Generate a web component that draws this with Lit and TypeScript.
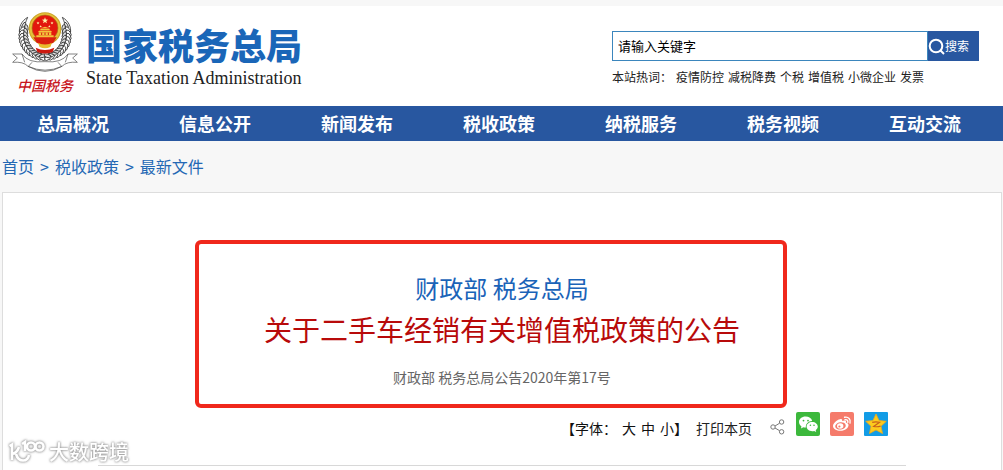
import { LitElement, html, css, svg } from "lit";
import { customElement } from "lit/decorators.js";

const NAV = ["总局概况", "信息公开", "新闻发布", "税收政策", "纳税服务", "税务视频", "互动交流"];
const HOT = ["疫情防控", "减税降费", "个税", "增值税", "小微企业", "发票"];
const STAR = "M0 -10 L2.4 -3.2 9.5 -3.1 3.8 1.2 5.9 8.1 0 4 -5.9 8.1 -3.8 1.2 -9.5 -3.1 -2.4 -3.2Z";

// Leaves of the wreath, laid out along an arc below the central disc.
const leaves = Array.from({ length: 12 }, (_, i) => {
  const deg = 196 - i * 9;
  const a = (deg * Math.PI) / 180;
  return { dx: Math.cos(a), y: 108 + 66 * Math.sin(a), rot: deg };
}).filter((l) => l.dx < -0.1);

const emblem = svg`
  <g stroke="#2b2b2b" stroke-width="2.4" fill="#fff">
    ${[1, -1].map(
      (s) => svg`<g transform=${`translate(133 0) scale(${s} 1)`}>
        <path d="M-52 52 C-70 62 -80 82 -76 100 M-52 52 C-58 66 -62 74 -62 96" fill="none"></path>
        <ellipse rx="4" ry="10" fill="#e4e4e4" transform="translate(-64 76) rotate(28)"></ellipse>
        ${leaves.map(
          (l) => svg`
          <ellipse rx="6" ry="11" transform=${`translate(${l.dx * 71} ${l.y}) rotate(${l.rot - 155})`}></ellipse>
          <ellipse rx="5" ry="10" fill="#dcdcdc" transform=${`translate(${l.dx * 58} ${l.y - 6}) rotate(${l.rot - 205})`}></ellipse>`
        )}
      </g>`
    )}
  </g>
  <circle cx="133" cy="86" r="49" fill="#c9a227"></circle>
  <circle cx="133" cy="86" r="46" fill="#e6c03a"></circle>
  <circle cx="133" cy="84" r="39" fill="#e3170d" stroke="#a8791a" stroke-width="2"></circle>
  <path d="M98 112 H168 L158 128 Q133 142 108 128Z" fill="#d9200f"></path>
  <path d="M112 128 Q133 139 154 128 L149 141 Q133 149 117 141Z" fill="#e8bd2e"></path>
  <path d="M105 143 Q133 157 161 143 L156 156 Q133 165 110 156Z" fill="#cc1a10"></path>
  <g fill="#f2c43c">
    <path d="M133 80 L146 85 H120Z M119 86 H147 V91 H119Z M115 92 H151 L154 96 H112Z M114 97 H152 V105 H114Z M107 106 H159 V112 H107Z"></path>
  </g>
  <path d="M123 98 V105 M133 98 V105 M143 98 V105" stroke="#cf1c10" stroke-width="3"></path>
  <g fill="#fff3a8">
    <path d=${STAR} transform="translate(133 62)"></path>
    <path d=${STAR} transform="translate(112 69) scale(.48)"></path>
    <path d=${STAR} transform="translate(154 69) scale(.48)"></path>
    <path d=${STAR} transform="translate(120 79) scale(.42)"></path>
    <path d=${STAR} transform="translate(146 79) scale(.42)"></path>
  </g>
  <path d="M36 162 H64 Q82 190 133 185 Q184 190 202 162 H230 L216 174 230 187 Q198 184 184 199 Q133 229 82 199 Q68 184 36 187 L50 174Z"
    fill="#fff" stroke="#555" stroke-width="2.2" stroke-linejoin="round"></path>
  <path d="M64 162 L72 187 M202 162 L194 187 M84 198 L94 187 M182 198 L172 187 M82 199 Q133 222 184 199"
    fill="none" stroke="#444" stroke-width="2"></path>
`;

@customElement("app-root")
export class AppRoot extends LitElement {
  static styles = css`
    :host {
      position: relative;
      min-height: 100vh;
      box-sizing: border-box;
      padding-top: 6px;
      display: flex;
      flex-direction: column;
      background: #f7f7f7;
      color: #222;
      font-family: "Noto Sans CJK SC", sans-serif;
      font-size: 14px;
      line-height: 20px;
    }
    a { color: inherit; text-decoration: none; }
    svg { display: block; }
    header {
      display: flex;
      justify-content: space-between;
      height: 100px;
      padding: 0 24px 0 10px;
      box-sizing: border-box;
      background: #fff;
    }
    .brand { display: flex; gap: 6px; }
    .mark { display: flex; flex-direction: column; align-items: center; padding-top: 4px; width: 70px; }
    .script { color: #c8161d; font-size: 14px; line-height: 20px; font-weight: 500; font-style: italic; }
    .names { padding-top: 22px; }
    .name {
      margin: 0;
      color: #1a66b8;
      font-family: "Liberation Sans", "Noto Sans CJK SC", sans-serif;
      font-size: 36px;
      line-height: 40px;
      font-weight: 900;
    }
    .en { font: 18px/20px "Liberation Serif", serif; color: #222; }
    .side { padding-top: 25px; width: 367px; }
    .search { display: flex; height: 30px; }
    .search input {
      flex: 1;
      min-width: 0;
      box-sizing: border-box;
      border: 1px solid #3b86bd;
      border-radius: 0;
      padding: 0 5px;
      background: #fff;
      color: #000;
      font: inherit;
      font-size: 13px;
      outline: none;
    }
    .search button {
      display: flex;
      align-items: center;
      width: 51px;
      padding: 0;
      border: 0;
      background: #2857a0;
      color: #fff;
      font: inherit;
      font-size: 12px;
    }
    .hot { display: flex; gap: 4px; margin-top: 6px; font-size: 12px; white-space: nowrap; }
    .menu { display: flex; padding: 0 7px 0 2px; background: #2857a0; color: #fff; }
    .menu a { flex: 1; text-align: center; font-size: 18px; line-height: 35px; font-weight: 700; }
    .crumbs { display: flex; gap: 6px; padding: 14px 2px; color: #2468b4; font-size: 16px; line-height: 23px; }
    main { flex: 1; margin: 0 1px 0 2px; border: 1px solid #ddd; border-bottom: 0; background: #fff; }
    .sheet { max-width: 808px; margin: 0 auto; border-bottom: 1px solid #d8d8d8; }
    .head { position: relative; padding-top: 75px; text-align: center; }
    .frame {
      position: absolute;
      top: 47px;
      left: calc(50% - 307px);
      width: 592px;
      height: 168px;
      box-sizing: border-box;
      border: 4px solid #f0281c;
      border-radius: 6px;
      pointer-events: none;
    }
    h1, h2 { margin: 0; font-weight: 400; }
    h2 { color: #1a63b8; font-size: 24px; line-height: 40px; }
    h1 { color: #b80a0a; font-size: 28px; line-height: 42px; }
    .doc { margin: 17px 0 0; color: #666; line-height: 20px; }
    .tools { display: flex; align-items: center; justify-content: flex-end; padding: 23px 18px 27px 0; }
    .sizes { display: flex; gap: 5px; margin-right: 8px; padding-top: 8px; color: #111; }
    .print { margin-right: 18px; padding-top: 8px; color: #222; }
    .share { margin: 6px 11px 0 0; }
    .net { display: flex; gap: 10px; }
    .stamp {
      position: absolute;
      left: 8px;
      bottom: 4px;
      display: flex;
      align-items: center;
      gap: 4px;
      color: #fff;
      font-size: 20px;
      line-height: 28px;
      font-weight: 500;
      filter: drop-shadow(0 0 1px #999) drop-shadow(0 0 1px #bbb);
    }
  `;

  render() {
    return html`
      <header>
        <div class="brand">
          <div class="mark">
            <svg width="70" height="65" viewBox="28 30 210 195" aria-hidden="true">${emblem}</svg>
            <span class="script">中国税务</span>
          </div>
          <div class="names">
            <p class="name">国家税务总局</p>
            <div class="en">State Taxation Administration</div>
          </div>
        </div>
        <div class="side">
          <form class="search" @submit=${(e: Event) => e.preventDefault()}>
            <input type="text" aria-label="关键字" .value=${"请输入关键字"} />
            <button type="submit">
              <svg width="17" height="18" viewBox="0 0 17 18" fill="none" stroke="#fff" stroke-width="2">
                <circle cx="8" cy="9" r="6.3"></circle>
                <path d="M12.3 13.3 L16 17"></path>
              </svg>
              搜索
            </button>
          </form>
          <div class="hot">
            <span>本站热词：</span>
            ${HOT.map((t) => html`<a href="#">${t}</a>`)}
          </div>
        </div>
      </header>
      <nav class="menu">${NAV.map((t) => html`<a href="#">${t}</a>`)}</nav>
      <nav class="crumbs">
        <a href="#">首页</a><span>&gt;</span><a href="#">税收政策</a><span>&gt;</span><a href="#">最新文件</a>
      </nav>
      <main>
        <article class="sheet">
          <div class="head">
            <h2>财政部 税务总局</h2>
            <h1>关于二手车经销有关增值税政策的公告</h1>
            <p class="doc">财政部 税务总局公告2020年第17号</p>
            <div class="frame"></div>
          </div>
          <div class="tools">
            <div class="sizes">
              <span>【字体：</span><a href="#">大</a><a href="#">中</a><span><a href="#">小</a>】</span>
            </div>
            <a class="print" href="#">打印本页</a>
            <svg class="share" width="15" height="16" viewBox="0 0 15 16" fill="none" stroke="#777" stroke-width="1">
              <circle cx="3" cy="8" r="2.2"></circle>
              <circle cx="11.6" cy="3" r="2.2"></circle>
              <circle cx="11.6" cy="12.8" r="2.2"></circle>
              <path d="M5 7 L9.6 4.2 M5 9 L9.6 11.7"></path>
            </svg>
            <div class="net">
              <a href="#" aria-label="微信">
                <svg width="24" height="24" viewBox="0 0 24 24">
                  <rect width="24" height="24" rx="2" fill="#3cb83c"></rect>
                  <path d="M9.6 4.6 C5.8 4.6 3 7 3 10.1 C3 11.9 4 13.4 5.5 14.4 L4.9 16.5 7.4 15.2 C8.2 15.4 9 15.6 9.9 15.5 C9.3 12 12.4 8.9 16.2 9 C15.6 6.4 12.9 4.6 9.6 4.6Z" fill="#fff"></path>
                  <path d="M16.2 9.9 C13 9.9 10.6 12 10.6 14.6 C10.6 17.2 13 19.3 16.2 19.3 C16.9 19.3 17.6 19.2 18.2 19 L20.2 20.1 19.7 18.2 C21 17.3 21.8 16.1 21.8 14.6 C21.8 12 19.3 9.9 16.2 9.9Z" fill="#fff"></path>
                  <g fill="#3cb83c"><circle cx="7.5" cy="8.6" r=".9"></circle><circle cx="12" cy="8.6" r=".9"></circle><circle cx="14.4" cy="13.2" r=".8"></circle><circle cx="18" cy="13.2" r=".8"></circle></g>
                </svg>
              </a>
              <a href="#" aria-label="微博">
                <svg width="24" height="24" viewBox="0 0 24 24">
                  <rect width="24" height="24" rx="2" fill="#f57b6b"></rect>
                  <path d="M10 7.2 C11.6 6.4 12.6 7.3 12.1 9.1 C14.6 8.1 16.6 8.5 15.9 10.6 C17.5 11 18.5 11.8 18.5 13.2 C18.5 16 15 18.7 10.6 18.7 C6.4 18.7 3 16.8 3 13.9 C3 11.5 6.6 7.8 10 7.2Z" fill="#fff"></path>
                  <ellipse cx="10.5" cy="13.9" rx="5.3" ry="3.6" transform="rotate(-8 10.5 13.9)" fill="#f57b6b"></ellipse>
                  <ellipse cx="10.2" cy="14" rx="3.2" ry="2.7" fill="#fff"></ellipse>
                  <circle cx="9.4" cy="14.5" r="1.1" fill="#f57b6b"></circle>
                  <path d="M14.6 5.3 C18.2 4.4 21.2 7.3 20 11 M15 7.7 C17 7.3 18.3 8.6 17.8 10.4" fill="none" stroke="#fff" stroke-width="1.4" stroke-linecap="round"></path>
                </svg>
              </a>
              <a href="#" aria-label="QQ空间">
                <svg width="24" height="24" viewBox="0 0 24 24">
                  <rect width="24" height="24" rx="1" fill="#129ce6"></rect>
                  <path d="M12 2 L15 8.5 22.3 9.3 17 14.2 18.5 21.5 12 17.9 5.5 21.5 7 14.2 1.7 9.3 9 8.5Z" fill="#fccb1d" stroke="#f0a818" stroke-width=".8" stroke-linejoin="round"></path>
                  <path d="M8.2 10.3 Q12 9.4 15.6 10.3 L9.6 14.4 Q13 15.2 16.6 14.2" fill="none" stroke="#c9601a" stroke-width="1.2"></path>
                </svg>
              </a>
            </div>
          </div>
        </article>
      </main>
      <div class="stamp">
        <svg width="37" height="26" viewBox="0 0 37 26" fill="none" stroke="#fff" stroke-width="2.6">
          <path d="M1.5 7 L4 5.5 V21 M4 15 Q9 14 11 8 M8 15 Q10 21.5 15 21.5 Q20 21.5 21 16"></path>
          <path d="M14 5 L17 3 V12"></path>
          <circle cx="23" cy="7.5" r="4"></circle>
          <circle cx="31.5" cy="7.5" r="4"></circle>
        </svg>
        <span>大数跨境</span>
      </div>
    `;
  }
}
